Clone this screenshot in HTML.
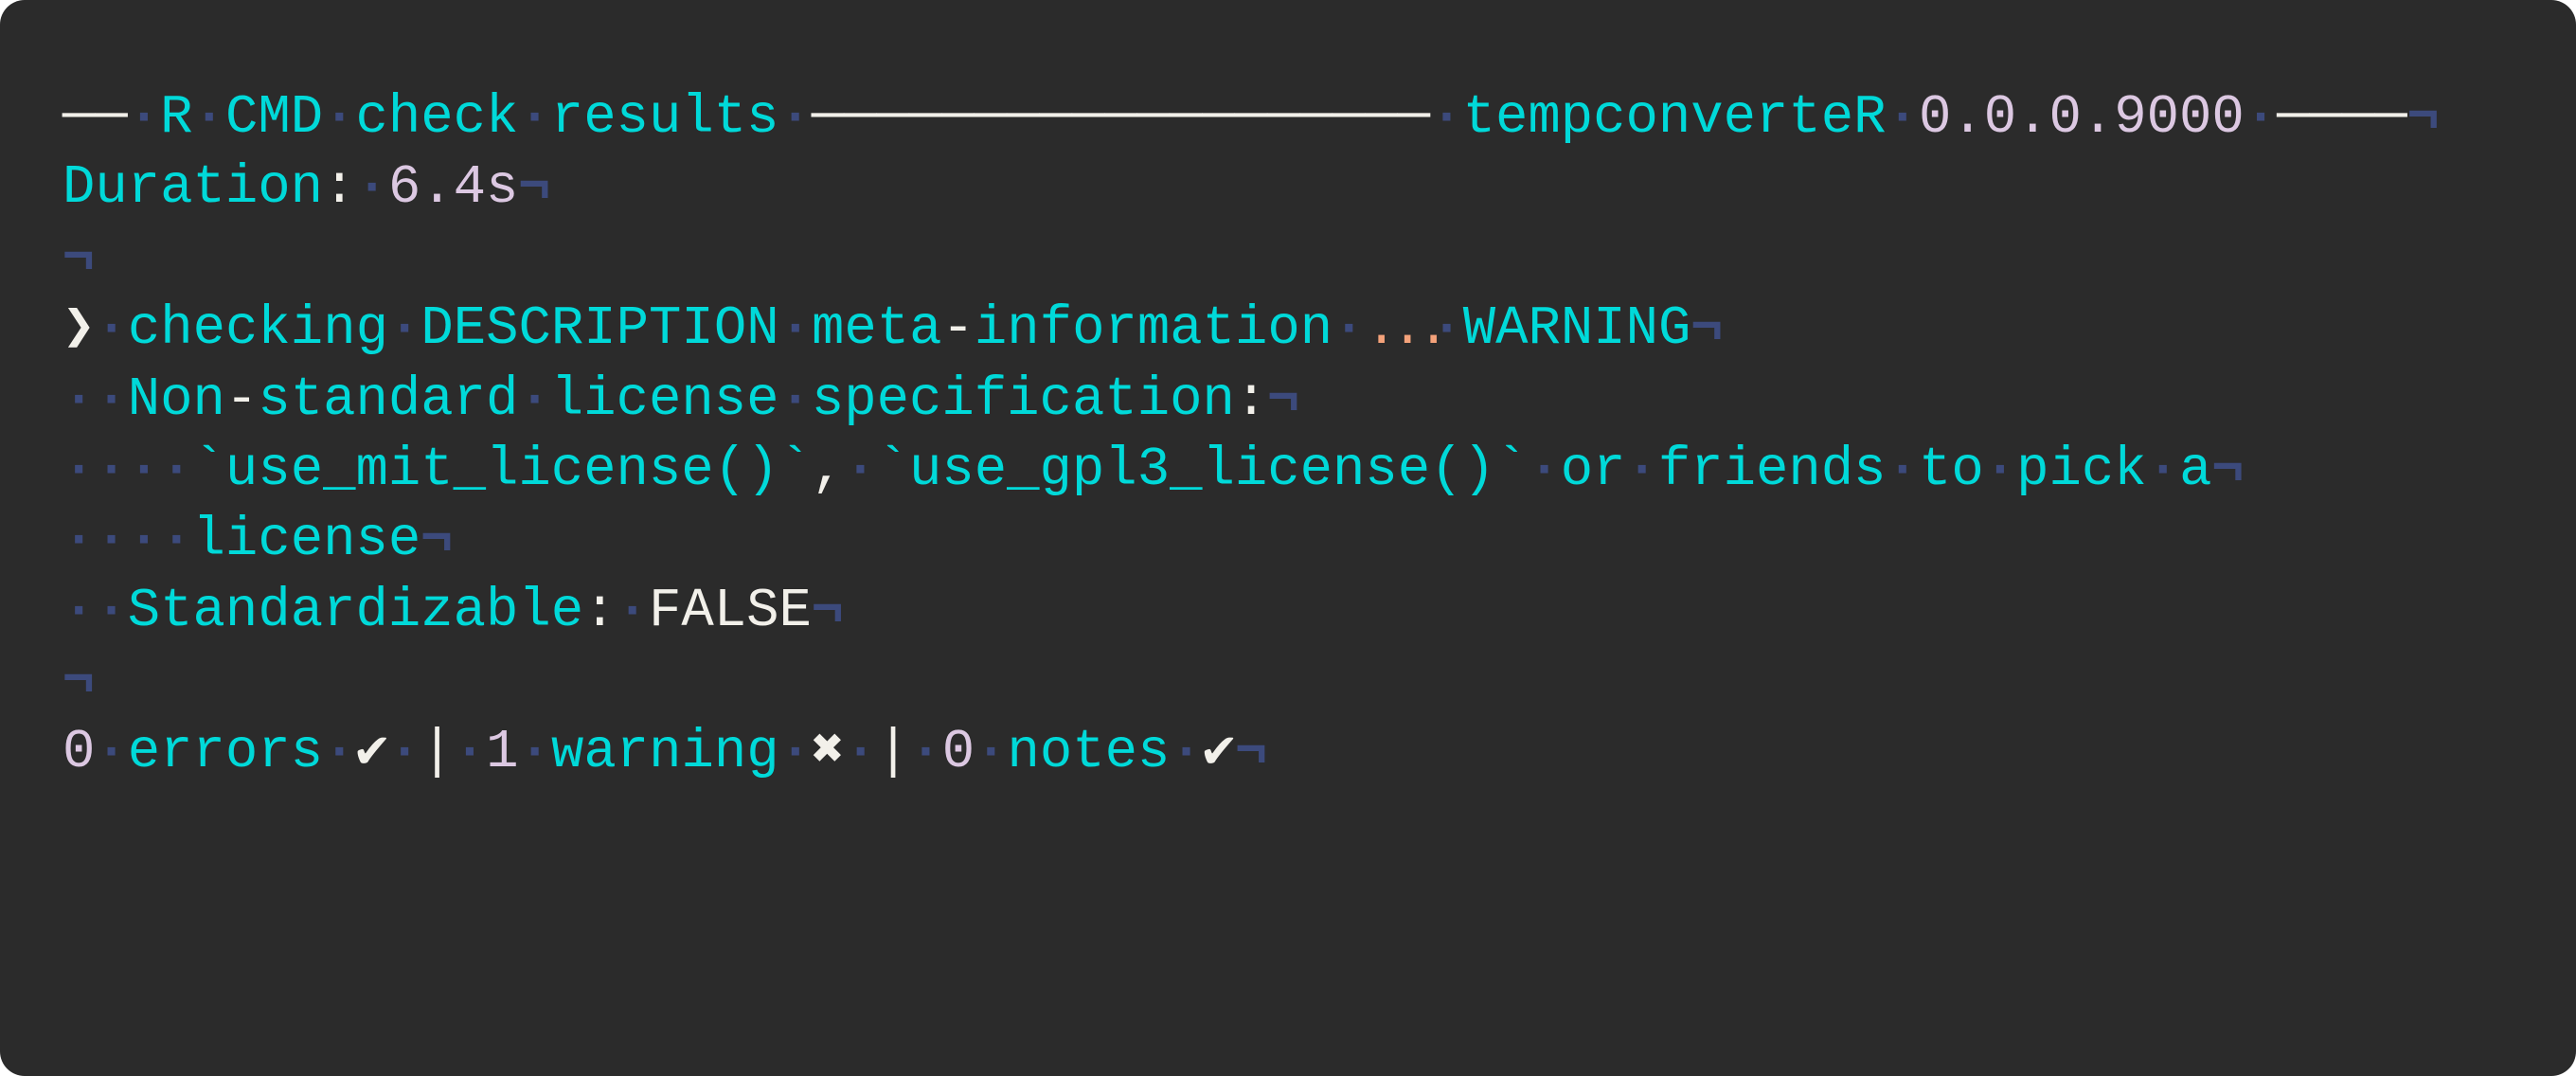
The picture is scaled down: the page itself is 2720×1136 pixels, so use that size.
<!DOCTYPE html>
<html><head><meta charset="utf-8"><style>
html,body{margin:0;padding:0;background:#ffffff;}
body{width:2720px;height:1136px;overflow:hidden;}
.t{position:absolute;left:0;top:0;width:2720px;height:1136px;background:#2b2b2b;border-radius:26px;}
pre{margin:0;position:absolute;left:66px;top:88px;font-family:"Liberation Mono","DejaVu Sans Mono",monospace;font-size:57.3px;line-height:74.4px;color:#00d9d9;white-space:pre;}
.d{color:#3c4a7c;font-weight:bold}
.w{color:#f2f0ea}
.l{color:#dcc8e2}
.o{color:#f4a27a}
.e{display:inline-block;width:2ch;text-align:center;letter-spacing:-0.12em}
</style></head><body><div class="t"><pre><span class="w">──</span><span class="d">·</span>R<span class="d">·</span>CMD<span class="d">·</span>check<span class="d">·</span>results<span class="d">·</span><span class="w">───────────────────</span><span class="d">·</span>tempconverteR<span class="d">·</span><span class="l">0.0.0.9000</span><span class="d">·</span><span class="w">────</span><span class="d">¬</span>
Duration<span class="w">:</span><span class="d">·</span><span class="l">6.4s</span><span class="d">¬</span>
<span class="d">¬</span>
<span class="w">❯</span><span class="d">·</span>checking<span class="d">·</span>DESCRIPTION<span class="d">·</span>meta<span class="w">-</span>information<span class="d">·</span><span class="o e">...</span><span class="d">·</span>WARNING<span class="d">¬</span>
<span class="d">··</span>Non<span class="w">-</span>standard<span class="d">·</span>license<span class="d">·</span>specification<span class="w">:</span><span class="d">¬</span>
<span class="d">····</span>`use_mit_license()`<span class="w">,</span><span class="d">·</span>`use_gpl3_license()`<span class="d">·</span>or<span class="d">·</span>friends<span class="d">·</span>to<span class="d">·</span>pick<span class="d">·</span>a<span class="d">¬</span>
<span class="d">····</span>license<span class="d">¬</span>
<span class="d">··</span>Standardizable<span class="w">:</span><span class="d">·</span><span class="w">FALSE</span><span class="d">¬</span>
<span class="d">¬</span>
<span class="l">0</span><span class="d">·</span>errors<span class="d">·</span><span class="w">✔</span><span class="d">·</span><span class="w">|</span><span class="d">·</span><span class="l">1</span><span class="d">·</span>warning<span class="d">·</span><span class="w">✖</span><span class="d">·</span><span class="w">|</span><span class="d">·</span><span class="l">0</span><span class="d">·</span>notes<span class="d">·</span><span class="w">✔</span><span class="d">¬</span></pre></div></body></html>
